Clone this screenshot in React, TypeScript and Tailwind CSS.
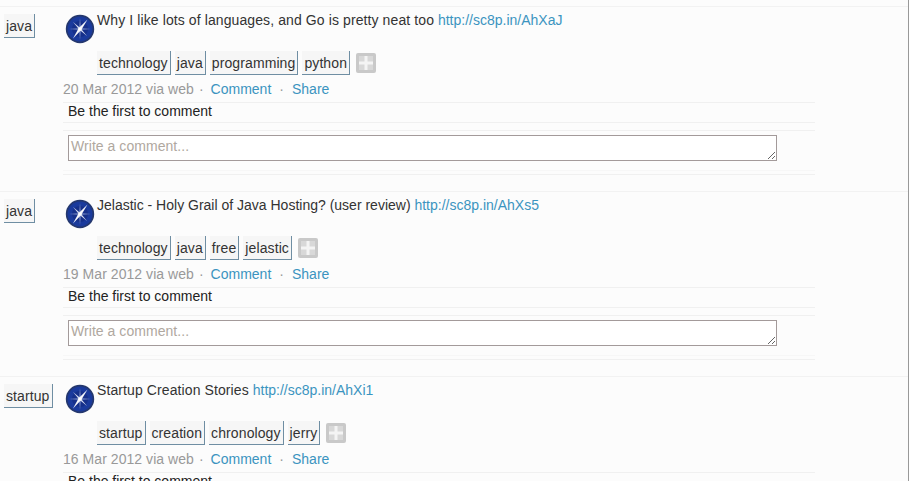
import React from "react";

type Post = {
  topic: string;
  title: string;
  titleClass: string;
  url: string;
  tags: string[];
  date: string;
};

const posts: Post[] = [
  {
    topic: "java",
    title: "Why I like lots of languages, and Go is pretty neat too",
    titleClass: "tracking-[0.1px]",
    url: "http://sc8p.in/AhXaJ",
    tags: ["technology", "java", "programming", "python"],
    date: "20 Mar 2012",
  },
  {
    topic: "java",
    title: "Jelastic - Holy Grail of Java Hosting? (user review)",
    titleClass: "tracking-normal",
    url: "http://sc8p.in/AhXs5",
    tags: ["technology", "java", "free", "jelastic"],
    date: "19 Mar 2012",
  },
  {
    topic: "startup",
    title: "Startup Creation Stories",
    titleClass: "tracking-[0.1px]",
    url: "http://sc8p.in/AhXi1",
    tags: ["startup", "creation", "chronology", "jerry"],
    date: "16 Mar 2012",
  },
];

const Tag = ({ label }: { label: string }) => (
  <span className="h-[24px] px-[2px] leading-[24px] tracking-[0.1px] bg-[#f6f6f6] border-r border-b border-[#6f8ea3] text-[#333333] whitespace-nowrap">
    {label}
  </span>
);

const Avatar = () => (
  <svg viewBox="0 0 30 30" className="w-[30px] h-[30px] shrink-0">
    <circle cx="15" cy="15" r="14.2" fill="#25386e" />
    <circle cx="15" cy="15" r="12.5" fill="#1a3a9c" />
    <circle cx="15" cy="15" r="8" fill="#16308a" />
    {/* compass star */}
    <path d="M15 4 L15.8 14.2 L26 15 L15.8 15.8 L15 26 L14.2 15.8 L4 15 L14.2 14.2 Z" fill="#8496cc" />
    <path d="M22.5 5.5 L16.4 15.8 L8 24.5 L13.6 14.2 Z" fill="#f4f6fb" />
    <path d="M8 8 L15.6 14.2 L22 22 L14.4 15.8 Z" fill="#d5dcf0" />
    <circle cx="15" cy="15" r="1.6" fill="#ffffff" />
  </svg>
);

const AddButton = () => (
  <span className="ml-[2px] w-[20px] h-[20px] rounded-[2px] bg-[#c9c9c9] flex items-center justify-center">
    <svg viewBox="0 0 14 14" className="w-[14px] h-[14px]">
      <rect width="14" height="14" fill="#d8d8d8" />
      <path d="M5.5 0 H8.5 V5.5 H14 V8.5 H8.5 V14 H5.5 V8.5 H0 V5.5 H5.5 Z" fill="#f4f4f4" />
    </svg>
  </span>
);

const PostRow = ({ post }: { post: Post }) => (
  <div className="h-[185px] shrink-0 border-t border-[#f2f2f2] flex">
    {/* Topic tag */}
    <div className="w-[63px] shrink-0 pl-[4px] pt-[7px]">
      <span className="inline-block h-[24px] px-[2px] leading-[24px] tracking-[0.1px] bg-[#f6f6f6] border-r border-b border-[#6f8ea3] text-[#333333]">
        {post.topic}
      </span>
    </div>

    {/* Main column */}
    <div className="w-[752px] flex flex-col">
      <div className="flex pl-[2px] pt-[7px] h-[44px]">
        <Avatar />
        <p className="pl-[2px] leading-[12px] text-[#333333]">
          <span className={post.titleClass}>{post.title}</span>{" "}
          <a className="text-[#3b94c0]">{post.url}</a>
        </p>
      </div>

      <div className="flex items-center gap-[4px] pl-[34px] h-[24px]">
        {post.tags.map((tag) => (
          <Tag key={tag} label={tag} />
        ))}
        <AddButton />
      </div>

      <div className="flex items-center h-[27px] pt-[1px] text-[#999999]">
        <span className="tracking-[0.05px]">{post.date} via web</span>
        <span className="mx-[5px]">·</span>
        <a className="ml-[2px] text-[#3b94c0]">Comment</a>
        <span className="mx-[8px]">·</span>
        <a className="text-[#3b94c0]">Share</a>
      </div>

      <div className="h-[21px] border-t border-b border-[#f0f0f0] pl-[5px] leading-[16px] text-[#222222]">
        Be the first to comment
      </div>

      <div className="mt-[7px] h-[45px] border-t border-b border-[#f0f0f0]">
        <div className="h-[40px] border-b border-[#f7f7f7] pl-[5px] pt-[4px]">
          <textarea
            placeholder="Write a comment..."
            className="block w-[709px] h-[26px] bg-white border border-[#a39a9a] px-[2px] pt-[2px] text-[14px] leading-[16px] tracking-[0.05px] placeholder:text-[#b0a8a0] outline-none"
          />
        </div>
      </div>
    </div>
  </div>
);

const App = () => {
  return (
    <div className="w-[909px] h-[481px] overflow-hidden bg-[#fcfcfc] border-r border-[#999999] pt-[6px] flex flex-col text-[14px] font-['Liberation_Sans',Arial,sans-serif]">
      {posts.map((post) => (
        <PostRow key={post.url} post={post} />
      ))}
    </div>
  );
};

export default App;
